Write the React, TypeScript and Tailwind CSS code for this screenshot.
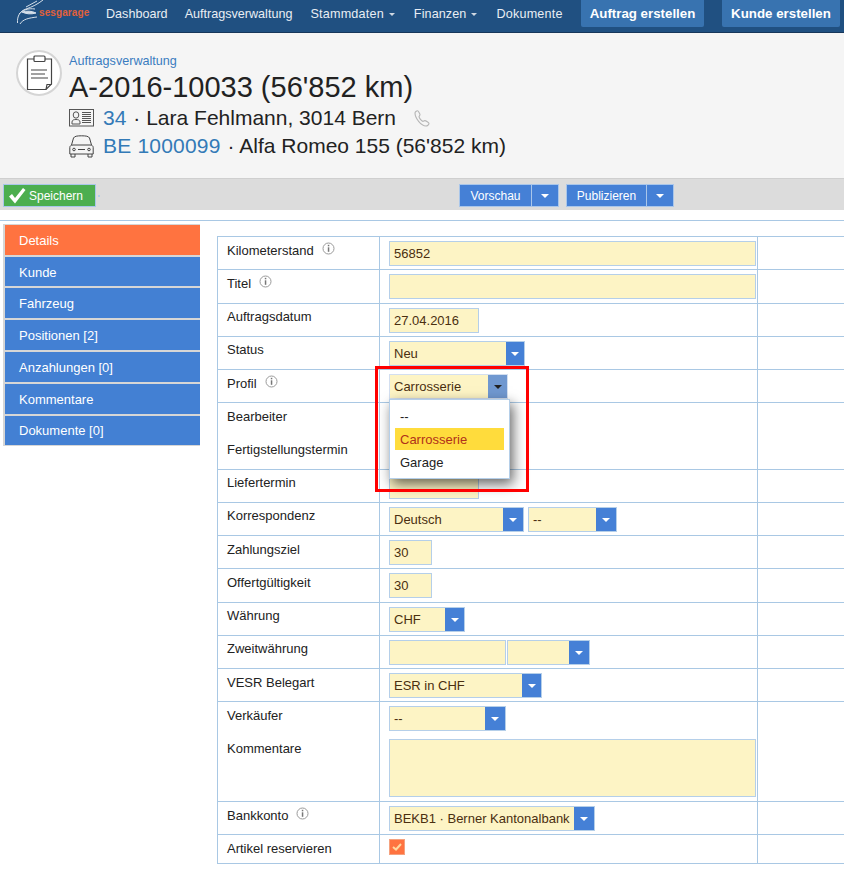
import type { ReactNode } from "react";

const arial = "font-['Liberation_Sans',Arial,sans-serif]";

const menu = [
  { label: "Details", cls: "h-[30px] pt-[1px]" },
  { label: "Kunde", cls: "h-[29px] pt-[1px]" },
  { label: "Fahrzeug", cls: "h-[30px] pt-[1px]" },
  { label: "Positionen [2]", cls: "h-[30px] pt-[1px]" },
  { label: "Anzahlungen [0]", cls: "h-[30px] pt-[1px]" },
  { label: "Kommentare", cls: "h-[30px] pt-[1px]" },
  { label: "Dokumente [0]", cls: "h-[29px]" },
];

const Caret = ({ dark }: { dark?: boolean }) => (
  <span
    className={`block w-0 h-0 border-x-[4px] border-x-transparent border-t-[4px] ${dark ? "border-t-[#222]" : "border-t-white"}`}
  />
);

const Info = () => (
  <svg width="13" height="13" viewBox="0 0 13 13" className="inline-block ml-[8px] -mt-[7px] align-middle">
    <circle cx="6.5" cy="6.5" r="5.5" fill="none" stroke="#9a9a9a" />
    <rect x="5.8" y="2.8" width="1.5" height="1.5" fill="#777" />
    <rect x="5.8" y="5.3" width="1.5" height="4.5" fill="#777" />
  </svg>
);

const Input = ({ w, value, h = "h-[25px]" }: { w: string; value?: string; h?: string }) => (
  <div className={`${w} ${h} bg-[#fdf4c5] border border-[#b5cfe9] pl-[4px] leading-[24px] text-[#4a2f10]`}>{value}</div>
);

const Select = ({ w, value, btn = "w-[19px]", focus }: { w: string; value?: string; btn?: string; focus?: boolean }) => (
  <div className={`${w} h-[25px] flex bg-[#fdf4c5] border ${focus ? "border-[#d3dff0]" : "border-[#b5cfe9]"} text-[#4a2f10]`}>
    <div className="flex-1 pl-[4px] leading-[24px] overflow-hidden whitespace-nowrap">{value}</div>
    <div className={`${btn} shrink-0 flex items-center justify-center ${focus ? "bg-[#7098d0]" : "bg-[#4580d6]"}`}>
      <Caret dark={focus} />
    </div>
  </div>
);

const Row = ({
  label,
  info,
  h = "h-[33px]",
  pt = "pt-[5px]",
  line = true,
  children,
}: {
  label?: string;
  info?: boolean;
  h?: string;
  pt?: string;
  line?: boolean;
  children?: ReactNode;
}) => (
  <div className={`flex ${h} ${line ? "border-t border-[#a9c8e4]" : ""}`}>
    <div className={`w-[162px] shrink-0 border-l border-[#a9c8e4] pl-[9px] ${pt} leading-[18px] text-[#222]`}>
      {label}
      {info && <Info />}
    </div>
    <div className="w-[378px] shrink-0 border-l border-[#a9c8e4] pl-[9px] pt-[4px]">{children}</div>
    <div className="flex-1 border-l border-[#a9c8e4]" />
  </div>
);

const Logo = () => (
  <div className="flex items-start w-[106px] h-[32px] pl-[17px] relative">
    <svg width="28" height="25" viewBox="0 0 28 25" fill="none" stroke="#d5dfe9" strokeWidth="1">
      <path d="M0.5 23C0 16 3 11 9 9C15 7 21 4 26 0" />
      <path d="M2 14C6 10 11 8 18 9" />
      <path d="M5 12C10 10.5 15 11 19 13C14 14.5 9 14 5 12Z" fill="#d5dfe9" />
      <path d="M3 24C6 19 12 18 20 17" />
      <path d="M9 7L20 1" />
    </svg>
    <span className="absolute left-[39px] top-[5px] text-[10px] font-bold text-[#e0603a] tracking-[0.1px]">sesgarage</span>
  </div>
);

const NavItem = ({ label, caret, cls }: { label: string; caret?: boolean; cls?: string }) => (
  <div className={`flex items-center gap-[5px] text-[#e9eef4] ${cls ?? ""}`}>
    {label}
    {caret && <span className="block w-0 h-0 border-x-[3px] border-x-transparent border-t-[3px] border-t-[#cfd8e2]" />}
  </div>
);

const Clipboard = () => (
  <div className="w-[46px] h-[46px] rounded-full border-2 border-[#d5d5d5] bg-white flex items-center justify-center shrink-0">
    <svg width="27" height="36" viewBox="0 0 27 36" fill="none" stroke="#444" strokeWidth="1.2">
      <path d="M1.5 4H25.5V29L20 34.5H1.5Z" />
      <path d="M20 34.5L21 29.5H25.5" />
      <rect x="8" y="1" width="11" height="5.5" rx="1" fill="#fff" />
      <path d="M5 15H21M5 19H19M5 23H22" />
    </svg>
  </div>
);

const IdCard = () => (
  <svg width="25" height="18" viewBox="0 0 25 18" fill="none" stroke="#555" className="shrink-0">
    <rect x="0.5" y="0.5" width="24" height="16.5" />
    <ellipse cx="7" cy="6" rx="2.8" ry="3.2" />
    <path d="M3 15V13C3 11 5 10.5 7 10.5C9 10.5 11 11 11 13V15Z" />
    <path d="M13 3.5H22M13 5.5H22M13 7.5H22M13 9.5H22M13 11.5H22M13 13.5H22" strokeWidth="1.2" />
  </svg>
);

const Car = () => (
  <svg width="25" height="23" viewBox="0 0 25 23" fill="none" stroke="#444" className="shrink-0">
    <path d="M2.5 10L4.5 3C5.5 1.2 8 0.8 12.5 0.8C17 0.8 19.5 1.2 20.5 3L22.5 10" />
    <path d="M0.8 12.5C0.8 11 2 10 4 10H21C23 10 24.2 11 24.2 12.5V19H0.8Z" />
    <path d="M2 19V22H6V19M19 19V22H23V19" />
    <circle cx="5" cy="14.5" r="1.3" />
    <circle cx="20" cy="14.5" r="1.3" />
    <path d="M9 14.5H16" />
  </svg>
);

const Phone = () => (
  <svg width="16" height="17" viewBox="0 0 16 17" fill="none" stroke="#b5b5b5" strokeWidth="1.1">
    <path d="M1 3C1 2 2.5 0.8 3.5 0.8C4.3 0.8 6 4 6 4.8C6 5.5 5 6 5 6.6C5 8 7.5 11 9 11.4C9.6 11.4 10 10.6 10.8 10.6C11.8 10.6 15 12.6 15 13.6C15 14.8 13.2 16 12 16C7 16 1 8 1 3Z" />
  </svg>
);

const SplitButton = ({ label, w }: { label: string; w: string }) => (
  <div className="flex h-[23px] border border-[#a9c6ea] bg-[#4580d6] text-white text-[12px]">
    <div className={`${w} flex items-center justify-center`}>{label}</div>
    <div className="w-[27px] border-l border-[#a9c6ea] flex items-center justify-center">
      <Caret />
    </div>
  </div>
);

const App = () => {
  return (
    <div className={`w-[844px] h-[873px] bg-white overflow-hidden text-[13px] ${arial}`}>
      {/* Navbar */}
      <div className="h-[33px] bg-[#205081] border-b border-[#17375a] flex items-start">
        <Logo />
        <div className="flex items-center h-[29px] text-[12.6px] w-[475px]">
          <NavItem label="Dashboard" />
          <NavItem label="Auftragsverwaltung" cls="ml-[17px]" />
          <NavItem label="Stammdaten" caret cls="ml-[18px] tracking-[0.2px]" />
          <NavItem label="Finanzen" caret cls="ml-[19px] tracking-[0.1px]" />
          <NavItem label="Dokumente" cls="ml-[19px] tracking-[0.2px]" />
        </div>
        <div className="flex items-start gap-[18px]">
          <div className="w-[123px] h-[27px] bg-[#3873b0] rounded-b-[2px] text-white font-bold text-[13.3px] flex items-center justify-center">
            Auftrag erstellen
          </div>
          <div className="w-[118px] h-[27px] bg-[#3873b0] rounded-b-[2px] text-white font-bold text-[13.3px] flex items-center justify-center">
            Kunde erstellen
          </div>
        </div>
      </div>

      {/* Header */}
      <div className="h-[146px] bg-[#f5f5f5] border-b border-[#cfcfcf] pl-[16px] pt-[17px] flex gap-[7px]">
        <Clipboard />
        <div className="pt-[3px]">
          <div className="text-[#3a7cc0] text-[12.6px] leading-[16px]">Auftragsverwaltung</div>
          <div className="text-[#222] text-[29px] leading-[32px] mt-[2px]">A-2016-10033 (56'852 km)</div>
          <div className="flex items-center h-[28px] mt-[1px] text-[21px] text-[#222]">
            <IdCard />
            <span className="text-[#337ab7] ml-[9px]">34</span>
            <span className="ml-[7px]">· Lara Fehlmann, 3014 Bern</span>
            <span className="ml-[18px]">
              <Phone />
            </span>
          </div>
          <div className="flex items-center h-[28px] text-[21px] text-[#222]">
            <Car />
            <span className="text-[#337ab7] ml-[9px] tracking-[0.2px]">BE 1000099</span>
            <span className="ml-[7px]">· Alfa Romeo 155 (56'852 km)</span>
          </div>
        </div>
      </div>

      {/* Toolbar */}
      <div className="h-[31px] bg-[#dcdcdc] flex items-start pt-[5px] pl-[3px]">
        <div className="w-[93px] h-[23px] bg-[#4cae4f] border border-[#a9c6ea] text-white text-[12px] flex items-center gap-[3px] pl-[4px]">
          <svg width="18" height="17" viewBox="0 0 18 17">
            <path d="M1 9.5L4 7L7 11L15 1L17.5 3L7 16.5Z" fill="#fff" />
          </svg>
          Speichern
        </div>
        <div className="w-[2px] h-[2px] bg-[#b5cfe9] mt-[11px] ml-[2px]" />
        <div className="flex gap-[7px] ml-[359px]">
          <SplitButton label="Vorschau" w="w-[71px]" />
          <SplitButton label="Publizieren" w="w-[79px]" />
        </div>
      </div>

      {/* Body */}
      <div className="mt-[10px] border-t border-[#a9c8e4] pl-[3px] flex items-start">
        <div className="w-[197px] mt-[3px] shrink-0 bg-[#d6d6d6] pl-[2px] py-[1px] flex flex-col gap-[2px]">
          {menu.map((m, i) => (
            <div
              key={m.label}
              className={`${m.cls} pl-[14px] leading-[30px] text-white ${i === 0 ? "bg-[#ff7340]" : "bg-[#4380d3]"}`}
            >
              {m.label}
            </div>
          ))}
        </div>

        <div className="ml-[17px] mt-[15px] w-[627px] border-b border-[#a9c8e4]">
          <Row label="Kilometerstand" info>
            <Input w="w-[367px]" value="56852" />
          </Row>
          <Row label="Titel" info h="h-[34px]">
            <Input w="w-[367px]" />
          </Row>
          <Row label="Auftragsdatum" pt="pt-[4px]">
            <Input w="w-[90px]" value="27.04.2016" />
          </Row>
          <Row label="Status" pt="pt-[4px]">
            <Select w="w-[136px]" value="Neu" btn="w-[18px]" />
          </Row>
          <Row label="Profil" info>
            <div className="relative">
              <Select w="w-[119px]" value="Carrosserie" focus />
              <div className="absolute -left-[14px] -top-[8px] w-[154px] h-[126px] border-[3px] border-[#ff0000] z-20" />
              <div className="absolute left-0 top-[25px] w-[121px] h-[80px] bg-white border border-[#b5cfe9] shadow-[3px_5px_12px_rgba(0,0,0,0.6)] z-10 px-[5px] pt-[6px] text-[#222]">
                <div className="h-[22px] pl-[5px] leading-[22px]">--</div>
                <div className="h-[22px] pl-[5px] leading-[23px] bg-[#ffdc3c] text-[#b0301a]">Carrosserie</div>
                <div className="h-[24px] pl-[5px] leading-[25px]">Garage</div>
              </div>
            </div>
          </Row>
          <Row label="Bearbeiter" />
          <Row label="Fertigstellungstermin" line={false} h="h-[34px]" pt="pt-[6px]" />
          <Row label="Liefertermin" pt="pt-[4px]">
            <Input w="w-[90px]" />
          </Row>
          <Row label="Korrespondenz" pt="pt-[4px]">
            <div className="flex gap-[4px]">
              <Select w="w-[135px]" value="Deutsch" btn="w-[20px]" />
              <Select w="w-[89px]" value="--" btn="w-[20px]" />
            </div>
          </Row>
          <Row label="Zahlungsziel">
            <Input w="w-[43px]" value="30" />
          </Row>
          <Row label="Offertgültigkeit" h="h-[34px]">
            <Input w="w-[43px]" value="30" />
          </Row>
          <Row label="Währung" pt="pt-[4px]">
            <Select w="w-[76px]" value="CHF" />
          </Row>
          <Row label="Zweitwährung" pt="pt-[4px]">
            <div className="flex gap-[1px]">
              <Input w="w-[117px]" />
              <Select w="w-[83px]" btn="w-[20px]" />
            </div>
          </Row>
          <Row label="VESR Belegart">
            <Select w="w-[153px]" value="ESR in CHF" />
          </Row>
          <Row label="Verkäufer">
            <Select w="w-[117px]" value="--" btn="w-[20px]" />
          </Row>
          <Row label="Kommentare" line={false} h="h-[67px]" pt="pt-[6px]">
            <div className="pt-[1px]">
              <Input w="w-[367px]" h="h-[58px]" />
            </div>
          </Row>
          <Row label="Bankkonto" info>
            <Select w="w-[206px]" value="BEKB1 · Berner Kantonalbank" btn="w-[20px]" />
          </Row>
          <Row label="Artikel reservieren" h="h-[29px]">
            <div className="w-[16px] h-[16px] bg-[#ff7340] border border-[#f5a27f] flex items-center justify-center">
              <svg width="10" height="8" viewBox="0 0 10 8" fill="none" stroke="#ffd9a0" strokeWidth="2">
                <path d="M1 4L4 6.5L9 1" />
              </svg>
            </div>
          </Row>
        </div>
      </div>
    </div>
  );
};

export default App;
